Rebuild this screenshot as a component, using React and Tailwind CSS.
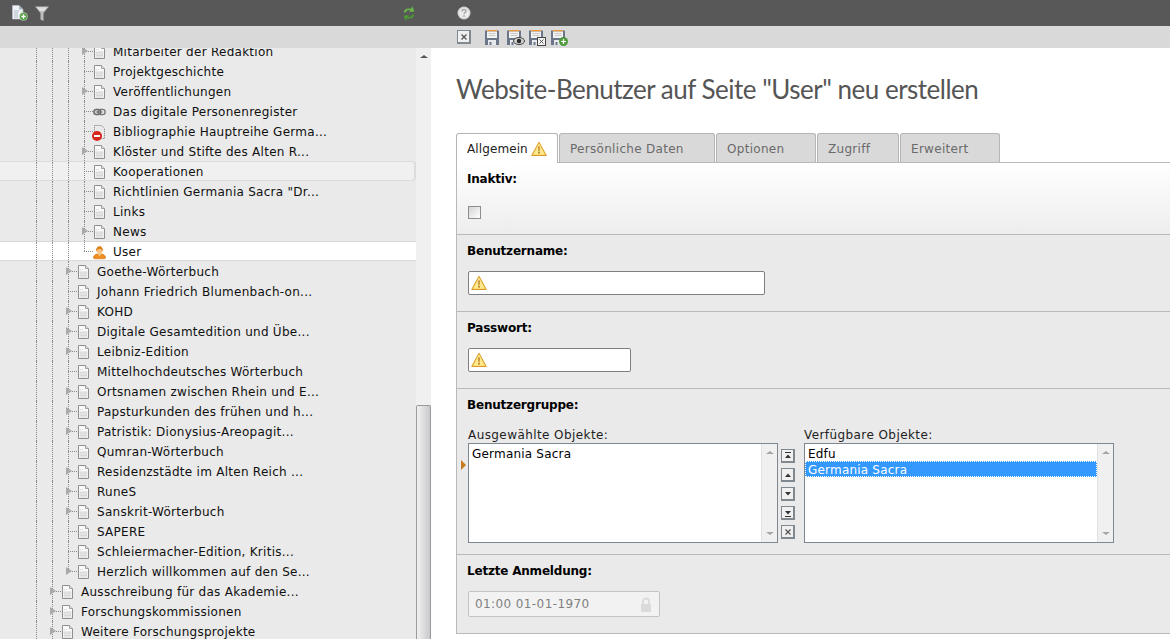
const treeRows = [
  { label: "Mitarbeiter der Redaktion", depth: 4, arrow: true },
  { label: "Projektgeschichte", depth: 4 },
  { label: "Veröffentlichungen", depth: 4, arrow: true },
  { label: "Das digitale Personenregister", depth: 4, icon: "link" },
  { label: "Bibliographie Hauptreihe Germa...", depth: 4, icon: "hidden" },
  { label: "Klöster und Stifte des Alten R...", depth: 4, arrow: true },
  { label: "Kooperationen", depth: 4, state: "hover" },
  { label: 'Richtlinien Germania Sacra "Dr...', depth: 4 },
  { label: "Links", depth: 4 },
  { label: "News", depth: 4, arrow: true },
  { label: "User", depth: 4, icon: "user", state: "active", last: true },
  { label: "Goethe-Wörterbuch", depth: 3, arrow: true },
  { label: "Johann Friedrich Blumenbach-on...", depth: 3 },
  { label: "KOHD", depth: 3, arrow: true },
  { label: "Digitale Gesamtedition und Übe...", depth: 3, arrow: true },
  { label: "Leibniz-Edition", depth: 3, arrow: true },
  { label: "Mittelhochdeutsches Wörterbuch", depth: 3 },
  { label: "Ortsnamen zwischen Rhein und E...", depth: 3, arrow: true },
  { label: "Papsturkunden des frühen und h...", depth: 3, arrow: true },
  { label: "Patristik: Dionysius-Areopagit...", depth: 3, arrow: true },
  { label: "Qumran-Wörterbuch", depth: 3 },
  { label: "Residenzstädte im Alten Reich ...", depth: 3, arrow: true },
  { label: "RuneS", depth: 3, arrow: true },
  { label: "Sanskrit-Wörterbuch", depth: 3, arrow: true },
  { label: "SAPERE", depth: 3 },
  { label: "Schleiermacher-Edition, Kritis...", depth: 3 },
  { label: "Herzlich willkommen auf den Se...", depth: 3, arrow: true, last: true },
  { label: "Ausschreibung für das Akademie...", depth: 2, arrow: true },
  { label: "Forschungskommissionen", depth: 2, arrow: true },
  { label: "Weitere Forschungsprojekte", depth: 2, arrow: true },
];

function PageIcon({ dashed }) {
  return (
    <svg width="13" height="14" viewBox="0 0 13 14" className="block">
      <path
        d="M1.500.5h7l3 3v10h-10z"
        fill={dashed ? "none" : "#fbfbfb"}
        stroke={dashed ? "#777" : "#8f8f8f"}
        strokeDasharray={dashed ? "1 1" : undefined}
      />
      {!dashed && (
        <>
          <path d="M8.500.5v3h3" fill="#e8e8e8" stroke="#a0a0a0" />
          <path d="M3 4.500h4" stroke="#d4d4d4" strokeDasharray="1 1" />
          <rect x="2.500" y="6" width="8" height="7" fill="#e6e6e6" />
          <path d="M3 8h7M3 10.500h7" stroke="#d6d6d6" />
        </>
      )}
    </svg>
  );
}

function LinkIcon() {
  return (
    <svg width="15" height="8" viewBox="0 0 15 8" className="block">
      <rect x="1" y="1" width="8" height="6" rx="3" fill="#c9c9c9" stroke="#666" strokeWidth="1.600" />
      <rect x="6" y="1" width="8" height="6" rx="3" fill="none" stroke="#777" strokeWidth="1.600" />
      <path d="M4 4h7" stroke="#666" strokeWidth="1.200" />
    </svg>
  );
}

function UserIcon() {
  return (
    <svg width="15" height="15" viewBox="0 0 15 15" className="block">
      <path d="M.5 14c0-3.300 2.500-5 7-5s7 1.700 7 5l-2 .7h-10z" fill="#ee8f1f" stroke="#c96f10" strokeWidth=".7" />
      <path d="M5.500 9h4l-2 2.500z" fill="#fad9a6" />
      <circle cx="7.500" cy="5" r="3.300" fill="#f6c27c" />
      <path d="M3.800 6.500C3 2.500 5.300.3 7.500.3s4.500 2.200 3.700 6.200c-.8-2.300-2.200-3.200-3.700-3.200s-2.900.9-3.700 3.200z" fill="#dd7d14" />
    </svg>
  );
}

function TreeIcon({ type }) {
  if (type === "link") return <LinkIcon />;
  if (type === "user") return <UserIcon />;
  if (type === "hidden") {
    return (
      <div className="relative">
        <PageIcon dashed />
        <div className="absolute -left-[1px] bottom-[-2px] flex h-[10px] w-[10px] items-center justify-center rounded-full bg-[#d8261c]">
          <div className="h-[2px] w-[6px] bg-white" />
        </div>
      </div>
    );
  }
  return <PageIcon />;
}

function TreeRow({ row }) {
  const guides = row.depth - 2;
  const stateClass =
    row.state === "active"
      ? "bg-white border-y border-[#d8d8d8]"
      : row.state === "hover"
        ? "bg-[#f0f0f0] border-y border-r-2 border-[#dcdcdc] rounded-r-sm"
        : "";

  return (
    <div className={`flex h-5 items-stretch ${stateClass}`}>
      <div className="w-9 shrink-0" />
      {[0, 1, 2].slice(0, guides + 1).map((g) => (
        <div key={g} className="w-4 shrink-0 border-l border-dotted border-[#8a8a8a]" />
      ))}
      <div className="relative w-[9px] shrink-0">
        <div
          className={`absolute left-0 top-0 w-0 border-l border-dotted border-[#8a8a8a] ${row.last ? "h-1/2" : "h-full"}`}
        />
        <div className="absolute left-0 top-1/2 w-[9px] border-t border-dotted border-[#8a8a8a]" />
        {row.arrow && (
          <div className="absolute -left-[2px] top-[6px] h-0 w-0 border-y-[4px] border-l-[6px] border-y-transparent border-l-[#a9a9a9]" />
        )}
      </div>
      <div className="flex w-[13px] shrink-0 items-center pt-[2px]">
        <TreeIcon type={row.icon} />
      </div>
      <span className="ml-[7px] self-center whitespace-nowrap pt-[2px] text-[12px] leading-5 tracking-[0.27px] text-[#101010]">
        {row.label}
      </span>
    </div>
  );
}

function Warning({ size = 16 }) {
  return (
    <svg width={size} height={size} viewBox="0 0 16 16" className="block shrink-0">
      <path d="M8 1.200 15.300 14.500H.7z" fill="#fbd65c" stroke="#d99a2b" strokeLinejoin="round" />
      <path d="M8 2.800 13.500 13.500H2.500z" fill="#fde98f" />
      <path d="M7.200 5.500h1.600l-.3 5h-1z" fill="#b5741c" />
      <rect x="7.200" y="11" width="1.600" height="1.600" fill="#b5741c" />
    </svg>
  );
}

function HelpIcon() {
  return (
    <svg width="14" height="14" viewBox="0 0 14 14" className="block">
      <circle cx="7" cy="7" r="6.500" fill="#d6d6d6" />
      <circle cx="7" cy="7" r="5" fill="#ececec" />
      <path d="M5 5.500C5 4 6 3.500 7 3.500s2 .6 2 1.800C9 6.700 7 6.700 7 8.300" fill="none" stroke="#a8a8a8" strokeWidth="1.500" />
      <rect x="6.200" y="9.300" width="1.600" height="1.600" fill="#a8a8a8" />
    </svg>
  );
}

function NewPageIcon() {
  return (
    <svg width="16" height="16" viewBox="0 0 16 16" className="block">
      <path d="M.5.500h6.500l4 4V14H.5z" fill="#eef1f5" stroke="#c4c9d0" strokeWidth=".6" />
      <path d="M7 .5v4h4" fill="#aeb7c2" />
      <path d="M2 6h5M2 8h4M2 10h4M2 12h4" stroke="#b3bac4" />
      <circle cx="11.500" cy="11.500" r="4" fill="#4e9a3d" stroke="#e8efe6" strokeWidth=".5" />
      <path d="M11.500 9.300v4.400M9.300 11.500h4.400" stroke="#fff" strokeWidth="1.400" />
    </svg>
  );
}

function FilterIcon() {
  return (
    <svg width="14" height="15" viewBox="0 0 14 15" className="block">
      <path d="M0 .5h14L8.500 7v8l-3-1.500V7z" fill="#bdbdbd" />
      <path d="M1.800 1.300h10.400L9 5H5z" fill="#dfdfdf" />
    </svg>
  );
}

function RefreshIcon() {
  return (
    <svg width="12" height="15" viewBox="0 0 12 15" className="block">
      <path d="M.8 6.500C1 3 4.300 1.700 8 2.800L9.300.3l2.200 5.200-5.600.2 1.200-1.500C4.800 3.700 3.300 4.600 2.900 6.500z" fill="#6ab84b" />
      <path d="M11.200 8.500C11 12 7.700 13.300 4 12.200L2.700 14.700.5 9.500l5.600-.2-1.200 1.500c2.300.5 3.800-.4 4.200-2.300z" fill="#4d9a35" />
    </svg>
  );
}

function SaveIcon({ badge }) {
  return (
    <div className="relative h-[15px] w-[15px]">
      <svg width="14" height="15" viewBox="0 0 14 15" className="block">
        <path d="M0 .5h13.500L14 1v14H0z" fill="#6b7688" />
        <rect x="2" y="0" width="10" height="1.500" fill="#ee9a3a" />
        <rect x="2" y="1.500" width="10" height="6.500" fill="#f2f2f2" />
        <path d="M3.500 3.500h7M3.500 5.500h7" stroke="#c8c8c8" />
        <rect x="3" y="10" width="8" height="5" fill="#e7e9ec" />
        <rect x="4.500" y="12" width="2" height="3" fill="#6b7688" />
      </svg>
      {badge === "view" && (
        <svg width="12" height="8" viewBox="0 0 12 8" className="absolute -right-[3px] bottom-0">
          <ellipse cx="6" cy="4" rx="5.500" ry="3.500" fill="#cfcfcf" stroke="#444" />
          <circle cx="6" cy="4" r="2.200" fill="#2b2b2b" />
        </svg>
      )}
      {badge === "close" && (
        <svg width="9" height="9" viewBox="0 0 9 9" className="absolute -right-[2px] -bottom-[1px]">
          <rect x=".5" y=".5" width="8" height="8" fill="#f4f4f4" stroke="#444" />
          <path d="M2.500 2.500l4 4M6.500 2.500l-4 4" stroke="#555" />
        </svg>
      )}
      {badge === "new" && (
        <svg width="9" height="9" viewBox="0 0 9 9" className="absolute -right-[2px] -bottom-[1px]">
          <circle cx="4.500" cy="4.500" r="4.500" fill="#4e9a3d" />
          <path d="M4.500 2v5M2 4.500h5" stroke="#fff" strokeWidth="1.200" />
        </svg>
      )}
    </div>
  );
}

function IconBox({ children, className = "" }) {
  return (
    <div
      className={`flex h-[14px] w-[14px] items-center justify-center border border-b-2 border-r-2 border-[#808890] bg-[#f0f0f0] ${className}`}
    >
      {children}
    </div>
  );
}

function CloseGlyph() {
  return (
    <svg width="8" height="8" viewBox="0 0 8 8" className="block">
      <path d="M1.500 1.500l5 5M6.500 1.500l-5 5" stroke="#555" strokeWidth="1.300" />
    </svg>
  );
}

function MoveGlyph({ dir, bar }) {
  const up = dir === "up";
  return (
    <svg width="8" height="8" viewBox="0 0 8 8" className="block">
      {bar && <rect x="1" y={up ? 0 : 7} width="6" height="1" fill="#333" />}
      <path d={up ? "M4 2.500 7 6H1z" : "M4 5.500 1 2h6z"} fill="#333" />
    </svg>
  );
}

function ListBox({ items, selected, marker }) {
  return (
    <div className="relative flex h-[100px] w-[310px] border border-[#7f8792] bg-white">
      {marker && (
        <div className="absolute -left-[8px] top-[16px] h-0 w-0 border-y-[5px] border-l-[5px] border-y-transparent border-l-[#c67c1c]" />
      )}
      <div className="flex-1 py-px">
        {items.map((item) => (
          <div
            key={item}
            className={`h-4 whitespace-nowrap px-[3px] text-[12px] leading-[18px] tracking-[0.2px] ${
              item === selected ? "bg-[#3399ff] text-white outline-1 -outline-offset-1 outline-dotted outline-white" : "text-black"
            }`}
          >
            {item}
          </div>
        ))}
      </div>
      <div className="flex w-4 flex-col items-center justify-between border-l border-[#e2e2e2] bg-[#f0f0f0] py-[7px]">
        <div className="h-0 w-0 border-x-[4px] border-b-[3px] border-x-transparent border-b-[#a5a5a5]" />
        <div className="h-0 w-0 border-x-[4px] border-t-[3px] border-x-transparent border-t-[#a5a5a5]" />
      </div>
    </div>
  );
}

function TextField({ width }) {
  return (
    <div className={`flex h-6 items-center rounded-[2px] border border-[#7f7f7f] bg-white pl-[2px] ${width}`}>
      <Warning size={16} />
    </div>
  );
}

const tabs = [
  { label: "Persönliche Daten", w: "w-[156px]" },
  { label: "Optionen", w: "w-[100px]" },
  { label: "Zugriff", w: "w-[82px]" },
  { label: "Erweitert", w: "w-[100px]" },
];

export default function App() {
  return (
    <div className="flex h-[639px] w-[1170px] flex-col overflow-hidden bg-white font-['DejaVu_Sans',Verdana,sans-serif]">
      {/* Dark top bar */}
      <div className="flex h-[26px] shrink-0 items-center bg-[#585858]">
        <div className="flex w-[432px] items-center pl-3">
          <NewPageIcon />
          <div className="ml-[7px]">
            <FilterIcon />
          </div>
          <div className="ml-[354px]">
            <RefreshIcon />
          </div>
        </div>
        <div className="pl-[25px]">
          <HelpIcon />
        </div>
      </div>

      {/* Toolbar */}
      <div className="flex h-[22px] shrink-0 items-center bg-[#d9d9d9]">
        <div className="w-[432px]" />
        <div className="ml-[25px] flex items-center">
          <IconBox>
            <CloseGlyph />
          </IconBox>
          <div className="ml-[14px] flex gap-[7px]">
            <SaveIcon />
            <SaveIcon badge="view" />
            <SaveIcon badge="close" />
            <SaveIcon badge="new" />
          </div>
        </div>
      </div>

      <div className="flex min-h-0 flex-1">
        {/* Page tree */}
        <div className="flex w-[432px] shrink-0">
          <div className="h-full w-[416px] overflow-hidden bg-[#eaeaea]">
            <div className="-mt-[7px]">
              {treeRows.map((row) => (
                <TreeRow key={row.label} row={row} />
              ))}
            </div>
          </div>
          <div className="flex h-full w-[15px] flex-col bg-[#f0f0f0]">
            <div className="ml-1 mt-[7px] h-0 w-0 border-x-[4px] border-b-[3px] border-x-transparent border-b-[#555]" />
            <div className="flex-1" />
            <div className="h-[234px] rounded-t-[2px] border-x border-t border-[#9a9a9a] bg-gradient-to-r from-[#f1f1f1] to-[#c9c9cd]" />
          </div>
        </div>

        {/* Edit form */}
        <div className="flex min-w-0 flex-1 flex-col pl-6">
          <h1 className="mt-[24px] h-[34px] whitespace-nowrap font-['Lato',sans-serif] text-[26px] leading-[34px] tracking-[-0.5px] text-[#555]">
            Website-Benutzer auf Seite "User" neu erstellen
          </h1>

          <div className="relative z-10 mt-[27px] flex h-[30px] items-start gap-px">
            <div className="flex h-[30px] w-[102px] items-center gap-[3px] rounded-t-[3px] border-x border-t border-[#b5b5b5] bg-white pl-[10px]">
              <span className="text-[12px] tracking-[0.1px] text-[#222]">Allgemein</span>
              <Warning size={16} />
            </div>
            {tabs.map((tab) => (
              <div
                key={tab.label}
                className={`flex h-[29px] items-center rounded-t-[3px] border-x border-t border-[#b5b5b5] bg-[#d9d9d9] pl-[10px] pt-[2px] text-[12px] tracking-[0.3px] text-[#6a6a6a] ${tab.w}`}
              >
                {tab.label}
              </div>
            ))}
          </div>

          <div className="-mt-px h-[472px] border-b border-l border-[#b9b9b9] bg-[#eaeaea] text-[12px] text-black">
            <div className="h-[73px] border-y border-[#b9b9b9] bg-gradient-to-b from-white to-[#ededed] pl-[10px] pt-2">
              <div className="font-bold leading-4 tracking-[-0.2px]">Inaktiv:</div>
              <div className="ml-px mt-[19px] h-[13px] w-[13px] border border-[#8e8e8e] bg-gradient-to-br from-[#d4d4d4] to-white" />
            </div>
            <div className="h-[77px] border-b border-[#b9b9b9] pl-[10px] pt-2">
              <div className="font-bold leading-4 tracking-[-0.2px]">Benutzername:</div>
              <div className="ml-px mt-[12px]">
                <TextField width="w-[297px]" />
              </div>
            </div>
            <div className="h-[77px] border-b border-[#b9b9b9] pl-[10px] pt-2">
              <div className="font-bold leading-4 tracking-[-0.2px]">Passwort:</div>
              <div className="ml-px mt-[12px]">
                <TextField width="w-[163px]" />
              </div>
            </div>
            <div className="h-[166px] border-b border-[#b9b9b9] pl-[10px] pt-2">
              <div className="font-bold leading-4 tracking-[-0.2px]">Benutzergruppe:</div>
              <div className="ml-px mt-[14px] flex items-start">
                <div>
                  <div className="h-[15px] text-[12px] leading-[17px] tracking-[0.42px] text-[#222]">Ausgewählte Objekte:</div>
                  <div className="mt-px">
                    <ListBox items={["Germania Sacra"]} marker />
                  </div>
                </div>
                <div className="ml-[3px] mt-[22px] flex flex-col gap-[5px]">
                  <IconBox>
                    <MoveGlyph dir="up" bar />
                  </IconBox>
                  <IconBox>
                    <MoveGlyph dir="up" />
                  </IconBox>
                  <IconBox>
                    <MoveGlyph dir="down" />
                  </IconBox>
                  <IconBox>
                    <MoveGlyph dir="down" bar />
                  </IconBox>
                  <IconBox>
                    <CloseGlyph />
                  </IconBox>
                </div>
                <div className="ml-[9px]">
                  <div className="h-[15px] text-[12px] leading-[17px] tracking-[0.42px] text-[#222]">Verfügbare Objekte:</div>
                  <div className="mt-px">
                    <ListBox items={["Edfu", "Germania Sacra"]} selected="Germania Sacra" />
                  </div>
                </div>
              </div>
            </div>
            <div className="pl-[10px] pt-2">
              <div className="font-bold leading-4 tracking-[-0.2px]">Letzte Anmeldung:</div>
              <div className="ml-px mt-[12px] flex h-[26px] w-[192px] items-center justify-between rounded-[2px] border border-[#c4c4c4] bg-[#f2f2f2] pl-[6px] pr-[7px] text-[12px] tracking-[0.4px] text-[#808080]">
                <span>01:00 01-01-1970</span>
                <svg width="12" height="15" viewBox="0 0 12 15" className="block">
                  <path d="M3 7V4.500a3 3 0 0 1 6 0V7" fill="none" stroke="#dadada" strokeWidth="1.800" />
                  <rect x="1" y="7" width="10" height="8" rx="1" fill="#dadada" />
                </svg>
              </div>
            </div>
          </div>
        </div>
      </div>
    </div>
  );
}
